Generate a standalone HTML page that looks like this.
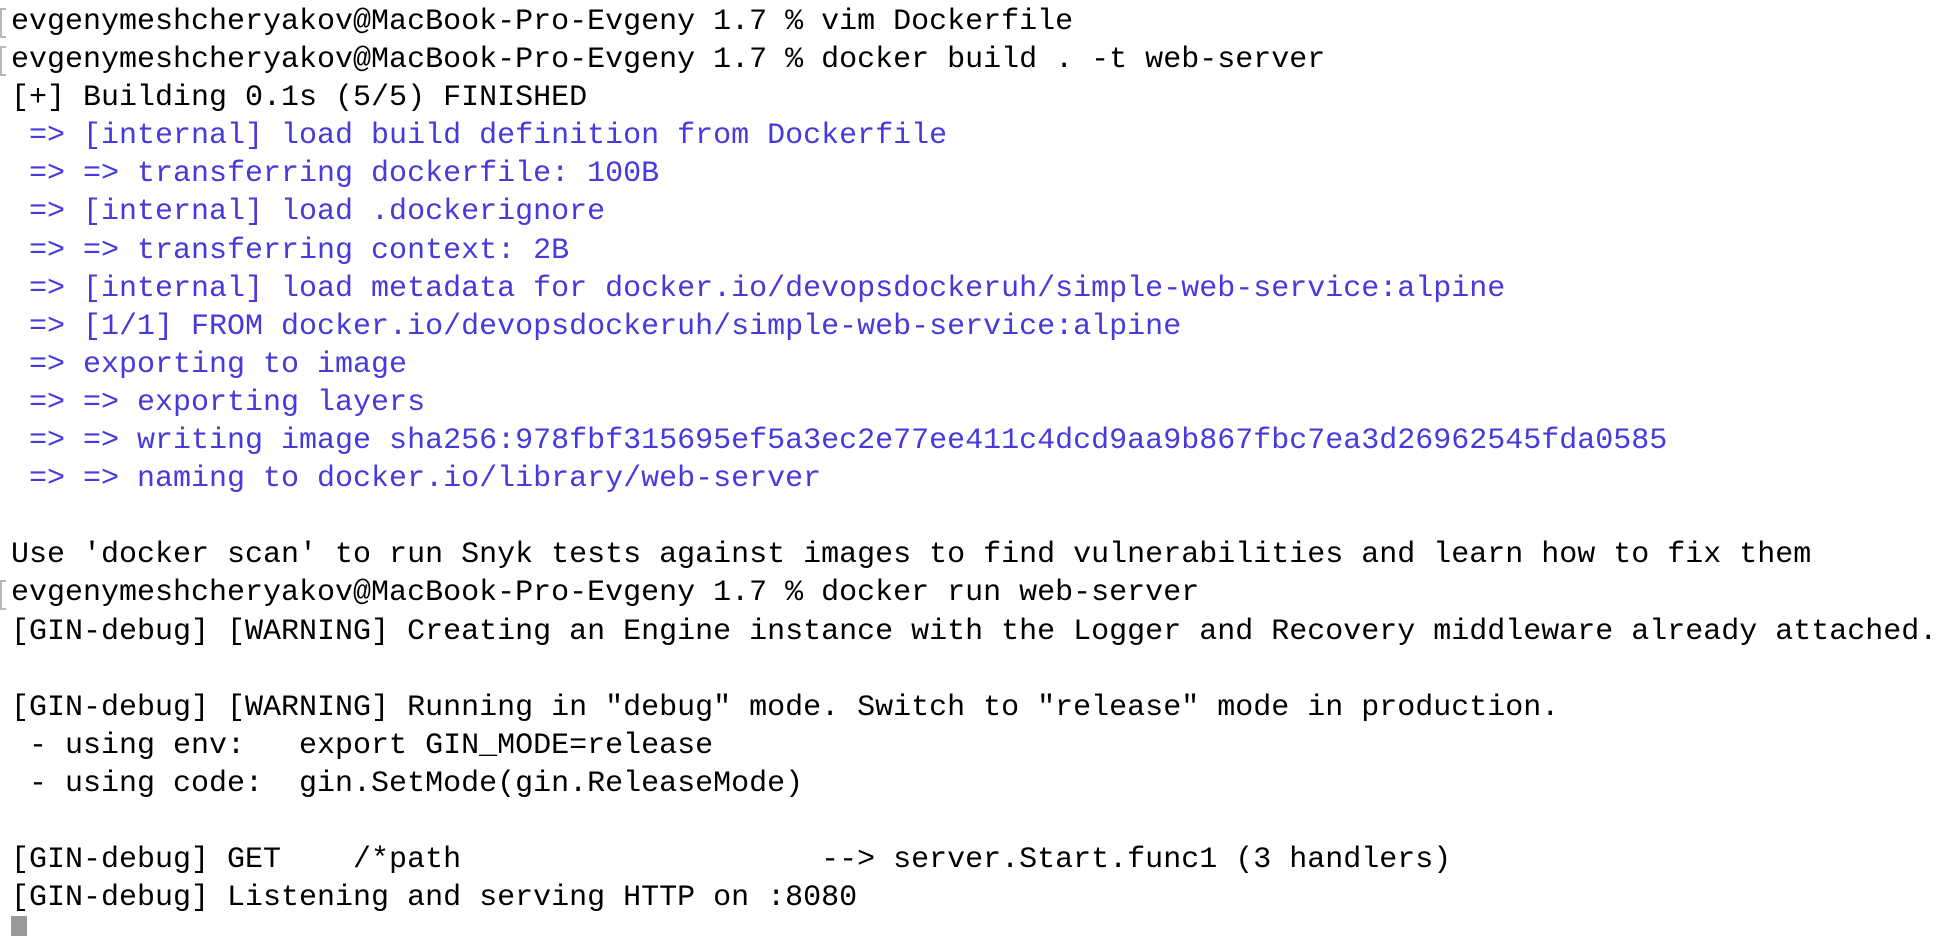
<!DOCTYPE html>
<html><head><meta charset="utf-8"><style>
html,body{margin:0;padding:0;background:#fff;width:1946px;height:934px;overflow:hidden}
pre{margin:0;position:absolute;left:11px;top:3px;font-family:"Liberation Mono",monospace;font-size:30px;line-height:38.1px;color:#000;letter-spacing:0}
.b{color:#4739dc}
.br{position:absolute;left:0;width:6px;height:30px;border:2px solid #b8b8b8;border-right:none;box-sizing:border-box}
.cur{position:absolute;left:11px;top:916px;width:16px;height:20px;background:#999}
</style></head><body>
<div class="br" style="top:8px"></div>
<div class="br" style="top:46px"></div>
<div class="br" style="top:580px"></div>
<pre>evgenymeshcheryakov@MacBook-Pro-Evgeny 1.7 % vim Dockerfile
evgenymeshcheryakov@MacBook-Pro-Evgeny 1.7 % docker build . -t web-server
[+] Building 0.1s (5/5) FINISHED
<span class="b"> =&gt; [internal] load build definition from Dockerfile
 =&gt; =&gt; transferring dockerfile: 100B
 =&gt; [internal] load .dockerignore
 =&gt; =&gt; transferring context: 2B
 =&gt; [internal] load metadata for docker.io/devopsdockeruh/simple-web-service:alpine
 =&gt; [1/1] FROM docker.io/devopsdockeruh/simple-web-service:alpine
 =&gt; exporting to image
 =&gt; =&gt; exporting layers
 =&gt; =&gt; writing image sha256:978fbf315695ef5a3ec2e77ee411c4dcd9aa9b867fbc7ea3d26962545fda0585
 =&gt; =&gt; naming to docker.io/library/web-server</span>

Use 'docker scan' to run Snyk tests against images to find vulnerabilities and learn how to fix them
evgenymeshcheryakov@MacBook-Pro-Evgeny 1.7 % docker run web-server
[GIN-debug] [WARNING] Creating an Engine instance with the Logger and Recovery middleware already attached.

[GIN-debug] [WARNING] Running in "debug" mode. Switch to "release" mode in production.
 - using env:   export GIN_MODE=release
 - using code:  gin.SetMode(gin.ReleaseMode)

[GIN-debug] GET    /*path                    --&gt; server.Start.func1 (3 handlers)
[GIN-debug] Listening and serving HTTP on :8080</pre>
<div class="cur"></div>
</body></html>
